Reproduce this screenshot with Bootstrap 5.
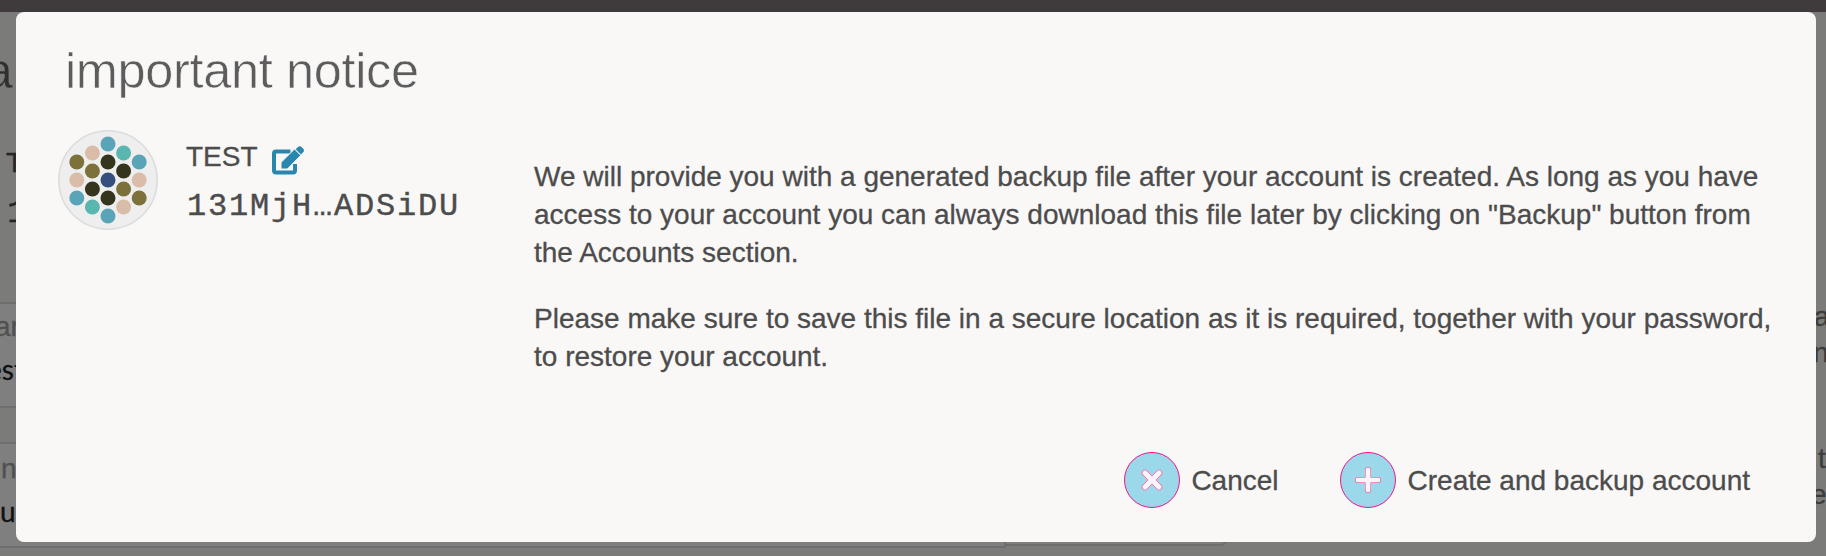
<!DOCTYPE html>
<html lang="en">
<head>
<meta charset="utf-8">
<meta name="viewport" content="width=device-width, initial-scale=1">
<title>important notice</title>
<link href="https://cdn.jsdelivr.net/npm/bootstrap@5.3.0/dist/css/bootstrap.min.css" rel="stylesheet">
<style>
  html, body { height: 100%; }
  body { font-family: "Liberation Sans", Arial, sans-serif; font-size: 28px; line-height: 38px; color: #4c4c4c; background: #7b7b79; overflow: hidden; -webkit-text-stroke: .3px; }
  .topbar { height: 12px; background: #3f3a3c; }
  .page-under { height: 544px; }
  .page-under div { white-space: nowrap; }
  .form-side { width: 1228px; }
  .under-title { font-size: 50px; line-height: 60px; margin-top: 29px; color: #303030; text-indent: -15px; -webkit-text-stroke: .5px #7b7b79; }
  .under-name { margin-top: 43px; color: #262626; padding-left: 6px; }
  .under-addr { font: 34px/50px "Liberation Mono", monospace; margin-top: 6px; height: 50px; color: #262626; padding-left: 7px; }
  .field { width: 1006px; height: 106px; border: 2px solid #6e6e6e; border-left: 0; background: #7f7f7f; padding-top: 4px; }
  .field.first { margin-top: 64px; }
  .field.second { margin-top: 34px; padding-top: 6px; }
  .field .caption { color: #505050; }
  .field .value { font-family: Lato, sans-serif; color: #111; line-height: 38px; margin-top: 4px; }
  .addon { width: 222px; height: 104px; margin-top: 34px; border: 2px solid #6e6e6e; border-left: 0; border-radius: 0 0 8px 0; background: #7f7f7f; }
  .help-side { width: 10px; line-height: 36px; color: #3c3c3c; padding-top: 287px; }
  .help-gap { margin-top: 70px; }
  .notice .modal-dialog { max-width: none; width: 1800px; margin: 12px 0 0 16px; }
  .notice .modal-content { height: 530px; border: 0; border-radius: 8px; background: #f9f8f7; color: #4c4c4c; padding: 29px 42px 34px; }
  .notice h1 { font-size: 50.5px; line-height: 60px; font-weight: 400; color: #5c5c5c; margin: 0 0 0 7px; letter-spacing: -.35px; -webkit-text-stroke: .6px #f9f8f7; }
  .identicon { width: 100px; height: 100px; margin-top: 29px; }
  .account { width: 476px; }
  .account-text { margin: 37px 0 0 28px; }
  .account-text .edit { margin-left: 14px; margin-top: 8px; }
  .address { font: 32px/44px "Liberation Mono", monospace; letter-spacing: 1.8px; margin-top: 9px; padding-left: 1px; -webkit-text-stroke: .4px #4c4c4c; }
  .message { padding-top: 57px; }
  .message p { margin: 0 0 28px; white-space: nowrap; }
  .action { background: none; border: 0; padding: 0; color: inherit; gap: 12px; }
  .action.cancel { gap: 11px; }
  .action span { padding-top: 2px; }
  .actions { gap: 61px; padding-right: 24px; }
</style>
</head>
<body>
<div class="topbar"></div>
<div class="page-under d-flex justify-content-between overflow-hidden">
  <div class="form-side">
    <div class="under-title">a</div>
    <div class="under-name">T</div>
    <div class="under-addr">1</div>
    <div class="field first"><div class="caption" style="text-indent:-5px">ar</div><div class="value" style="text-indent:-13px">est</div></div>
    <div class="d-flex align-items-start">
      <div class="field second"><div class="caption" style="text-indent:1px">n</div><div class="value">u</div></div>
      <div class="addon"></div>
    </div>
  </div>
  <div class="help-side">
    <div style="text-indent:-2px">ar</div>
    <div style="text-indent:-3px">n</div>
    <div class="help-gap" style="text-indent:2px">t</div>
    <div style="text-indent:-5px">ec</div>
  </div>
</div>

<div class="modal notice d-block overflow-hidden" tabindex="-1" role="dialog">
  <div class="modal-dialog">
    <div class="modal-content">
      <h1>important notice</h1>
      <div class="d-flex">
        <div class="account d-flex flex-shrink-0">
          <svg class="identicon flex-shrink-0" viewBox="0 0 100 100">
            <circle cx="50" cy="50" r="49.2" fill="#eee" stroke="#dcdcdc" stroke-width="1.6"/>
            <g fill="#5aa4b7"><circle cx="50" cy="14" r="7.5"/><circle cx="50" cy="86" r="7.5"/><circle cx="81.2" cy="32" r="7.5"/><circle cx="18.8" cy="68" r="7.5"/></g>
            <g fill="#5ab7b0"><circle cx="65.6" cy="23" r="7.5"/><circle cx="34.4" cy="77" r="7.5"/></g>
            <g fill="#d9bda9"><circle cx="34.4" cy="23" r="7.5"/><circle cx="18.8" cy="50" r="7.5"/><circle cx="81.2" cy="50" r="7.5"/><circle cx="65.6" cy="77" r="7.5"/></g>
            <g fill="#7c703b"><circle cx="18.8" cy="32" r="7.5"/><circle cx="34.4" cy="41" r="7.5"/><circle cx="65.6" cy="59" r="7.5"/><circle cx="81.2" cy="68" r="7.5"/></g>
            <g fill="#35341d"><circle cx="50" cy="32" r="7.5"/><circle cx="65.6" cy="41" r="7.5"/><circle cx="34.4" cy="59" r="7.5"/><circle cx="50" cy="68" r="7.5"/></g>
            <circle cx="50" cy="50" r="7.5" fill="#374f7c"/>
          </svg>
          <div class="account-text">
            <div class="d-flex align-items-start"><span>TEST</span>
              <svg class="edit" width="32" height="29" viewBox="0 0 32 29">
                <path d="M18.500 5.500H4Q2 5.500 2 7.500V24.500q0 2 2 2h17q2 0 2-2V18" fill="none" stroke="#2987ad" stroke-width="4"/>
                <path d="M9 23v-6.600L22.500 3l6.300 6.300L15.400 23z" fill="#2987ad" stroke="#f9f8f7" stroke-width="1"/>
                <path d="M23.700 3.200l2-2q2-2 4 0l1.400 1.400q1.700 1.800 0 3.600l-2.100 2.200z" fill="#2987ad"/>
              </svg>
            </div>
            <div class="address">131MjH…ADSiDU</div>
          </div>
        </div>
        <div class="message">
          <p>We will provide you with a generated backup file after your account is created. As long as you have<br>access to your account you can always download this file later by clicking on "Backup" button from<br>the Accounts section.</p>
          <p>Please make sure to save this file in a secure location as it is required, together with your password,<br>to restore your account.</p>
        </div>
      </div>
      <div class="actions d-flex justify-content-end mt-auto">
        <button class="action cancel d-flex align-items-center" type="button">
          <svg width="56" height="56" viewBox="0 0 56 56"><circle cx="28" cy="28" r="27.500" fill="#9bd9ea" stroke="#f0128a" stroke-width="1"/><g stroke-linecap="round"><path d="M21 21l14 14M35 21l-14 14" stroke="#f06db4" stroke-width="6.600"/><path d="M21 21l14 14M35 21l-14 14" stroke="#f9f4f6" stroke-width="5"/></g></svg>
          <span>Cancel</span>
        </button>
        <button class="action d-flex align-items-center" type="button">
          <svg width="56" height="56" viewBox="0 0 56 56"><circle cx="28" cy="28" r="27.500" fill="#9bd9ea" stroke="#f0128a" stroke-width="1"/><g stroke-linecap="round"><path d="M28 18v20M18 28h20" stroke="#f06db4" stroke-width="6.200"/><path d="M28 18v20M18 28h20" stroke="#f9f4f6" stroke-width="4.600"/></g></svg>
          <span>Create and backup account</span>
        </button>
      </div>
    </div>
  </div>
</div>
<script src="https://cdn.jsdelivr.net/npm/bootstrap@5.3.0/dist/js/bootstrap.bundle.min.js"></script>
</body>
</html>
